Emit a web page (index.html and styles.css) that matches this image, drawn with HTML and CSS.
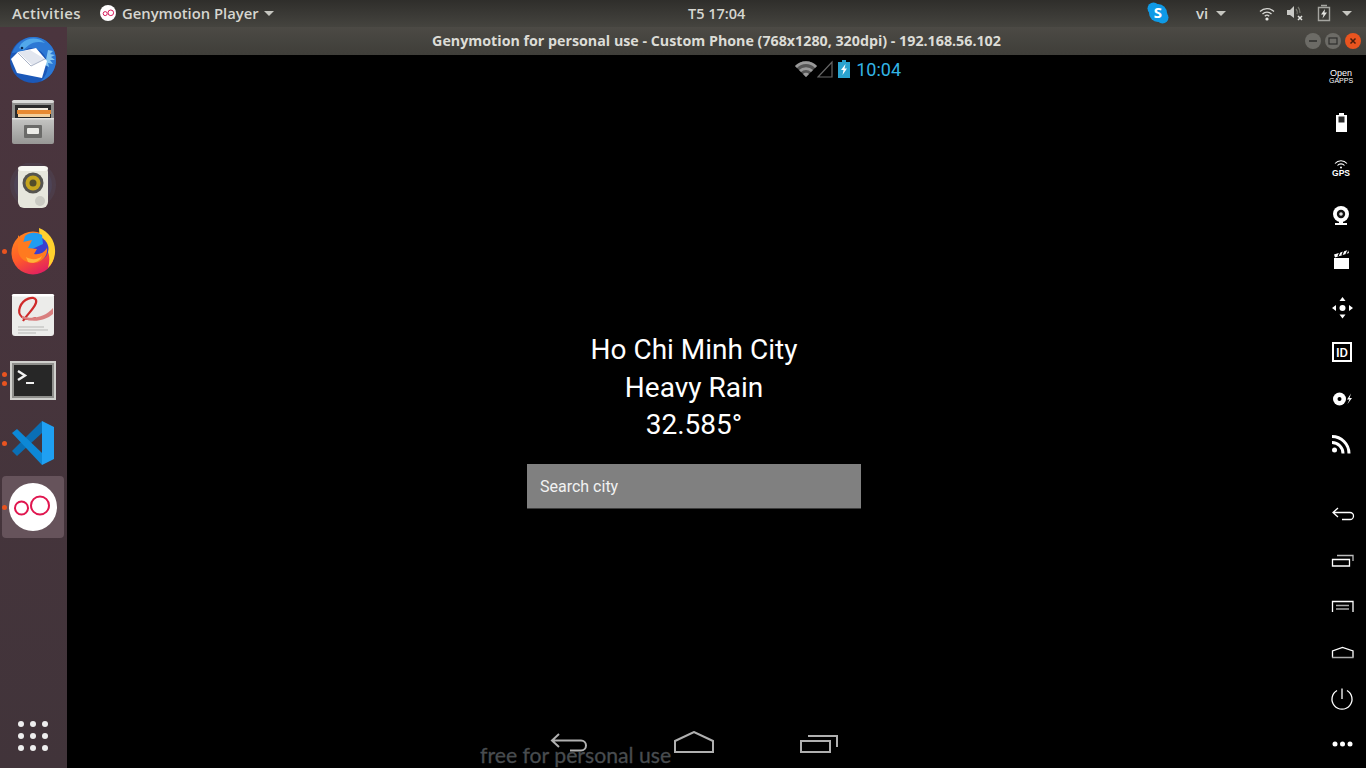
FILE: index.html
```html
<!DOCTYPE html>
<html lang="vi">
<head>
<meta charset="utf-8">
<title>Genymotion</title>
<link rel="stylesheet" href="styles.css">
</head>
<body>
<header class="topbar">
  <div class="top-left">
    <span class="activities">Activities</span>
    <span class="app-menu">
      <svg class="app-icon" viewBox="0 0 16 16"><circle cx="8" cy="8" r="8" fill="#fff"/><circle cx="5.2" cy="8.6" r="2" fill="none" stroke="#d81b5a" stroke-width="1"/><circle cx="10.8" cy="7.8" r="2.8" fill="none" stroke="#d81b5a" stroke-width="1"/></svg>
      <span class="app-name">Genymotion Player</span>
      <i class="caret"></i>
    </span>
  </div>
  <div class="clock">T5 17:04</div>
  <div class="top-right">
    <svg class="skype" viewBox="0 0 22 22"><circle cx="6.500" cy="6.500" r="6" fill="#0f9ae6"/><circle cx="15.500" cy="15.500" r="6" fill="#0f9ae6"/><circle cx="11" cy="11" r="9" fill="#0f9ae6"/><text x="11" y="16" text-anchor="middle" class="skype-s">S</text></svg>
    <span class="lang">vi</span>
    <i class="caret lang-caret"></i>
    <svg class="tray wifi-t" viewBox="0 0 16 16"><path d="M1 6.500a10 10 0 0 1 14 0M3.500 9a6.500 6.500 0 0 1 9 0M5.800 11.200a3.200 3.200 0 0 1 4.400 0" fill="none" stroke="#d8d8d4" stroke-width="1.300"/><circle cx="8" cy="14" r="1.600" fill="#e8e8e4"/></svg>
    <svg class="tray sound-t" viewBox="0 0 18 16"><path d="M1 5h3l4-4v12L4 10H1z" fill="#c9c9c5"/><path d="M10 4a5 5 0 0 1 1 5M12 2a8 8 0 0 1 2 6" fill="none" stroke="#77776f" stroke-width="1.200"/><path d="M12 11l4 4M16 11l-4 4" stroke="#e4e4e0" stroke-width="1.500"/></svg>
    <svg class="tray batt-t" viewBox="0 0 14 18"><path d="M4 1.500h6M1.500 3.500h11v13h-11z" fill="none" stroke="#a5a5a0" stroke-width="1.400"/><path d="M8 5L4 10.500h2.500L5.500 14.500 10 8.500H7.500z" fill="#e4e4e0"/></svg>
    <i class="caret"></i>
  </div>
</header>

<div class="desktop">
  <nav class="dock">
    <div class="dock-item">
      <svg class="dock-icon" viewBox="0 0 48 48">
        <circle cx="24" cy="25" r="23" fill="#1b58b8"/>
        <path d="M3 18C7 7 17 1 26 2c12 1 21 11 21 23 0 10-6 18-15 21 6-6 8-13 6-20-2-8-9-14-18-13L13 17z" fill="#2c78d4"/>
        <path d="M12 9c7-7 17-7 24-1-6-2-12-1-16 2l-6 5-4-2z" fill="#52a8ea"/>
        <path d="M39 15l5 1-3 3 5 1-4 2 4 3-5 0 3 4-5-1 1 4-4-2" fill="#82c4f0"/>
        <path d="M2 24L9 17l18-4 11 13-5 17-25-5z" fill="#fff"/>
        <path d="M9 17l12-2 15 9-13 6z" fill="#e2e6ef"/>
        <path d="M9 18l13 13 14-7" fill="none" stroke="#a8b2c6" stroke-width="1"/>
        <circle cx="13" cy="13" r="1.300" fill="#0f2850"/>
      </svg>
    </div>
    <div class="dock-item">
      <svg class="dock-icon" viewBox="0 0 48 48">
        <defs><linearGradient id="cab" x1="0" y1="0" x2="0" y2="1"><stop offset="0" stop-color="#c6c6c4"/><stop offset="1" stop-color="#979795"/></linearGradient></defs>
        <rect x="3" y="1" width="42" height="24" rx="3" fill="#8f8f8d"/>
        <rect x="3" y="1" width="42" height="3" rx="2" fill="#dadad8"/>
        <rect x="6" y="6" width="36" height="16" fill="#2a2a2a"/>
        <rect x="9" y="9" width="30" height="3" fill="#f2ece0"/>
        <rect x="8" y="11" width="34" height="4" fill="#e78a33"/>
        <rect x="9" y="15" width="32" height="3" fill="#f3cf9c"/>
        <rect x="3" y="19" width="42" height="26" rx="2" fill="url(#cab)"/>
        <rect x="3" y="19" width="42" height="1.500" fill="#e2e2e0"/>
        <rect x="15" y="26" width="18" height="13" rx="1" fill="#6b6b69"/>
        <rect x="18" y="29" width="12" height="6" rx="1" fill="#ecece8"/>
      </svg>
    </div>
    <div class="dock-item">
      <svg class="dock-icon" viewBox="0 0 48 48">
        <circle cx="24" cy="22" r="23" fill="#544c62" opacity=".35"/>
        <circle cx="24" cy="22" r="19" fill="#4e4860" opacity=".55"/>
        <rect x="9" y="3" width="30" height="42" rx="6" fill="#e6e6dc"/>
        <rect x="9" y="3" width="30" height="5" rx="4" fill="#f8f8f2"/>
        <circle cx="24" cy="20" r="10.500" fill="#55544f"/>
        <circle cx="24" cy="20" r="7.500" fill="#c6a51d"/>
        <circle cx="24" cy="20" r="3.500" fill="#534d2a"/>
        <circle cx="31" cy="38" r="5" fill="#cacac2"/>
      </svg>
    </div>
    <div class="dock-item has-pip">
      <i class="pip"></i>
      <svg class="dock-icon" viewBox="0 0 48 48">
        <defs>
          <linearGradient id="ffa" x1=".1" y1="0" x2=".6" y2="1"><stop offset="0" stop-color="#ff8a1c"/><stop offset=".55" stop-color="#ff5a2a"/><stop offset="1" stop-color="#e2215f"/></linearGradient>
        </defs>
        <circle cx="24" cy="26" r="21.500" fill="url(#ffa)"/>
        <path d="M30 1c10 4 17 13 16 25-.5 6-3 11-7 15 2-7 2-14-2-20-2-5-7-8-7-20z" fill="#ffd12e"/>
        <circle cx="27" cy="22" r="12.500" fill="#3a3fd0"/>
        <path d="M16 9c5-4 11-4 17-1l1 9-13 6-8-3z" fill="#1f9cf0"/>
        <path d="M9 8l5 7 9-2-4 8 9 1-3 5c5 1 10-1 13-6 1 9-6 15-14 15-9 0-16-7-15-16z" fill="#ff7a1f"/>
        <path d="M17 30c5 3 12 3 16-1-2 6-9 8-14 6z" fill="#ffb33a"/>
      </svg>
    </div>
    <div class="dock-item">
      <svg class="dock-icon" viewBox="0 0 48 48">
        <rect x="3" y="3" width="42" height="42" rx="3" fill="#ececea"/>
        <rect x="3" y="3" width="42" height="2.500" rx="2" fill="#fff"/>
        <path d="M27 27C14 31 8 24 11 16 14 8 25 4 27 9c2 5-8 13-13 21" fill="none" stroke="#cf2a2a" stroke-width="2.200"/>
        <path d="M13 25c11 4 23 1 31-8v6c-8 7-21 9-31 4z" fill="#d97f7f"/>
        <path d="M9 36h26M9 39h30M9 42h18" stroke="#b7b7b5" stroke-width="1"/>
      </svg>
    </div>
    <div class="dock-item has-pip">
      <i class="pip two"></i>
      <i class="pip two-b"></i>
      <svg class="dock-icon" viewBox="0 0 48 48">
        <rect x="1" y="6" width="46" height="39" fill="#d0d0cd"/>
        <rect x="3" y="8" width="42" height="35" fill="#8f8f8c"/>
        <rect x="5" y="10" width="38" height="31" fill="#272727"/>
        <path d="M9 16l7 4.500-7 4.500" fill="none" stroke="#f2f2f2" stroke-width="2.400"/>
        <path d="M17 28h8" stroke="#f2f2f2" stroke-width="2"/>
      </svg>
    </div>
    <div class="dock-item has-pip">
      <i class="pip"></i>
      <svg class="dock-icon" viewBox="0 0 48 48">
        <path d="M33 2L3 32l5 5 25-23z" fill="#0a6fb5"/>
        <path d="M33 46V34L8 10l-5 4z" fill="#0d88d6"/>
        <path d="M33 2l12 6v32l-12 6z" fill="#1fa0f2"/>
      </svg>
    </div>
    <div class="dock-item active has-pip">
      <i class="pip"></i>
      <svg class="dock-icon" viewBox="0 0 48 48"><circle cx="24" cy="24" r="24" fill="#fff"/><circle cx="12.500" cy="25" r="6.500" fill="none" stroke="#e0164f" stroke-width="2"/><circle cx="31" cy="22.500" r="9" fill="none" stroke="#e0164f" stroke-width="2"/></svg>
    </div>
    <div class="apps-grid"><i></i><i></i><i></i><i></i><i></i><i></i><i></i><i></i><i></i></div>
  </nav>

  <main class="window">
    <div class="titlebar">
      <span class="title">Genymotion for personal use - Custom Phone (768x1280, 320dpi) - 192.168.56.102</span>
      <div class="win-btns">
        <span class="win-btn"><svg viewBox="0 0 16 16"><path d="M4 8h8" stroke="#2e2e2c" stroke-width="1.500"/></svg></span>
        <span class="win-btn"><svg viewBox="0 0 16 16"><rect x="4" y="5" width="8" height="6" fill="none" stroke="#2e2e2c" stroke-width="1.200"/></svg></span>
        <span class="win-btn close"><svg viewBox="0 0 16 16"><path d="M5.500 5.500l5 5M10.500 5.500l-5 5" stroke="#4a1d0c" stroke-width="1.500"/></svg></span>
      </div>
    </div>
    <div class="content">
      <section class="screen">
        <div class="status">
          <svg class="st-wifi" viewBox="0 0 22 16"><path d="M0 5a15 15 0 0 1 22 0L11 16z" fill="#555"/><path d="M0 5a15 15 0 0 1 22 0l-2 2a12 12 0 0 0-18 0zM4 9a10 10 0 0 1 14 0l-2 2a7 7 0 0 0-10 0zM8 13a4 4 0 0 1 6 0l-3 3z" fill="#999"/></svg>
          <svg class="st-signal" viewBox="0 0 16 18"><path d="M1 17L15 2v15z" fill="none" stroke="#666" stroke-width="1.200"/></svg>
          <svg class="st-batt" viewBox="0 0 12 18"><path d="M4 0h4v2h4v16H0V2h4z" fill="#2aa3cf"/><path d="M7.500 4L3 10h2.500L4.500 15 9 8.500H6.500z" fill="#fff"/></svg>
          <span class="st-time">10:04</span>
        </div>
        <div class="weather">
          <div>Ho Chi Minh City</div>
          <div>Heavy Rain</div>
          <div>32.585°</div>
        </div>
        <div class="search">Search city</div>
        <div class="nav">
          <div class="nav-item"><svg viewBox="0 0 40 24"><path d="M10 3L3 9.500l7 6.500M3 9.500h29a5 5 0 0 1 0 10h-11" fill="none" stroke="#b0b0b0" stroke-width="2"/></svg></div>
          <div class="nav-item"><svg viewBox="0 0 40 24"><path d="M1 10L20 1l19 9v11H1z" fill="none" stroke="#b0b0b0" stroke-width="2"/></svg></div>
          <div class="nav-item"><svg viewBox="0 0 40 24"><path d="M2 10h29v11H2zM9 5h29v11" fill="none" stroke="#b0b0b0" stroke-width="2"/></svg></div>
        </div>
        <div class="watermark">free for personal use</div>
      </section>

      <aside class="rail">
        <div class="rail-item gapps"><b class="open">Open</b><b class="caps">GAPPS</b></div>
        <div class="rail-item"><svg viewBox="0 0 30 30"><path d="M13 6h5v2h3v17H10V8h3z" fill="#fff"/><rect x="12.500" y="9.500" width="6" height="6" fill="#2a2a2a"/></svg></div>
        <div class="rail-item gps"><svg viewBox="0 0 16 9"><path d="M2 3.500a8 8 0 0 1 12 0M4.500 5.500a4.500 4.500 0 0 1 7 0" fill="none" stroke="#fff" stroke-width="1.100"/><circle cx="8" cy="7.500" r="1" fill="#fff"/></svg><b>GPS</b></div>
        <div class="rail-item"><svg viewBox="0 0 30 30"><circle cx="15" cy="15" r="8" fill="#fff"/><circle cx="15" cy="15" r="4.200" fill="#111"/><circle cx="15" cy="15" r="1.800" fill="#ddd"/><path d="M9 24h12v2H9zM13 22h4v3h-4z" fill="#fff"/></svg></div>
        <div class="rail-item"><svg viewBox="0 0 30 30"><path d="M8 13h15v11H8z" fill="#fff"/><path d="M8 9.500L22 5l1 3L9 12.500z" fill="#fff"/><path d="M12 11.500l2-5M16 10l2-5M20 9l2-4" stroke="#000" stroke-width="1.200"/></svg></div>
        <div class="rail-item"><svg viewBox="0 0 30 30"><circle cx="16.500" cy="17" r="3" fill="#fff"/><path d="M16.500 6l3 4h-6zM16.500 27.500l-3-4h6zM6 17l4-3v6zM27 17l-4 3v-6z" fill="#fff"/></svg></div>
        <div class="rail-item"><span class="id-box">ID</span></div>
        <div class="rail-item"><svg viewBox="0 0 30 30"><circle cx="13.500" cy="16" r="6.500" fill="#fff"/><circle cx="13.500" cy="16" r="2" fill="#000"/><path d="M25 10.500l-4 6h2.500L21.500 21l4.500-6h-2.500z" fill="#fff"/></svg></div>
        <div class="rail-item"><svg viewBox="0 0 30 30"><circle cx="8.500" cy="21" r="2.500" fill="#fff"/><path d="M6 13.500a11 11 0 0 1 11 11M6 7.500a17 17 0 0 1 17 17" fill="none" stroke="#fff" stroke-width="3"/></svg></div>
        <div class="rail-item rail-split"><svg viewBox="0 0 30 30"><path d="M12 9L7 13.500l5 4.500M7 13.500h17a3.500 3.500 0 0 1 0 7h-8" fill="none" stroke="#fff" stroke-width="1.300"/></svg></div>
        <div class="rail-item"><svg viewBox="0 0 30 30"><path d="M6.500 14.500h17v6.500h-17z" fill="none" stroke="#fff" stroke-width="1.300"/><path d="M11 10.500h16V16" fill="none" stroke="#bbb" stroke-width="1.300"/></svg></div>
        <div class="rail-item"><svg viewBox="0 0 30 30"><path d="M6.500 21V10.500H27V21" fill="none" stroke="#fff" stroke-width="1.300"/><path d="M10 14.500h13M10 18h13" stroke="#aaa" stroke-width="1.500"/></svg></div>
        <div class="rail-item"><svg viewBox="0 0 30 30"><path d="M6.500 20.500V14l10-3.500 10.500 3.500v6.500" fill="none" stroke="#fff" stroke-width="1.300"/><path d="M6 20.500h21.500" stroke="#aaa" stroke-width="1.500"/></svg></div>
        <div class="rail-item"><svg viewBox="0 0 30 30"><path d="M16 5.500V16M11 7.500a10 10 0 1 0 10 0" fill="none" stroke="#fff" stroke-width="1.300"/></svg></div>
        <div class="rail-item"><svg viewBox="0 0 30 30"><circle cx="9" cy="15" r="2.500" fill="#fff"/><circle cx="16.500" cy="15" r="2.500" fill="#fff"/><circle cx="24" cy="15" r="2.500" fill="#fff"/></svg></div>
      </aside>
    </div>
  </main>
</div>
</body>
</html>
```

FILE: styles.css
```css
* { box-sizing: border-box; }
html, body { margin: 0; padding: 0; height: 100%; overflow: hidden; background: #000; }
body { width: 1366px; height: 768px; display: flex; flex-direction: column; font-family: "Open Sans", "Noto Sans", sans-serif; }

.topbar { height: 27px; flex: none; display: flex; align-items: center; padding-bottom: 1px; background: linear-gradient(#2f2e2b, #45443f); color: #d6d6d0; font-size: 15px; font-weight: 600; }
.top-left { flex: 0 0 688px; display: flex; align-items: center; padding-left: 12px; }
.activities { width: 88px; letter-spacing: .3px; }
.app-menu { display: flex; align-items: center; }
.app-icon { width: 16px; height: 16px; margin-right: 6px; }
.app-name { font-size: 14.800px; }
.caret { display: inline-block; width: 0; height: 0; border-left: 5px solid transparent; border-right: 5px solid transparent; border-top: 5px solid #c6c6c0; margin-left: 5px; }
.clock { width: 57px; white-space: nowrap; font-size: 14.500px; text-align: center; }
.top-right { margin-left: auto; display: flex; align-items: center; padding-right: 14px; }
.skype { width: 22px; height: 22px; margin-right: 27px; }
.skype-s { fill: #fff; font-size: 15px; font-weight: 700; font-family: "Open Sans", sans-serif; }
.lang { width: 13px; font-size: 15px; }
.lang-caret { margin-left: 7px; margin-right: 33px; }
.tray { flex: none; }
.wifi-t { width: 16px; height: 16px; margin-right: 11px; }
.sound-t { width: 18px; height: 16px; margin-right: 13px; }
.batt-t { width: 14px; height: 18px; margin-right: 6px; }

.desktop { flex: 1; display: flex; min-height: 0; }

.dock { width: 67px; flex: none; display: flex; flex-direction: column; background: linear-gradient(#4b353e, #41343a); }
.dock-item { height: 64px; flex: none; display: flex; align-items: center; justify-content: center; position: relative; width: 66px; }
.dock-icon { width: 48px; height: 48px; display: block; }
.dock-item.active::before { content: ""; position: absolute; left: 2px; top: 1px; width: 62px; height: 62px; border-radius: 4px; background: #66535b; }
.dock-item.active .dock-icon { position: relative; }
.pip { position: absolute; left: 2px; top: 29.500px; width: 5px; height: 5px; border-radius: 50%; background: #e95420; z-index: 1; }
.pip.two { top: 24.500px; }
.pip.two-b { top: 33.500px; }
.apps-grid { margin-top: auto; margin-bottom: 17px; margin-left: 18px; width: 30px; display: grid; grid-template-columns: repeat(3, 6px); gap: 6px; justify-content: space-between; }
.apps-grid i { width: 6px; height: 6px; border-radius: 50%; background: #eeeeee; }

.window { flex: 1; min-width: 0; display: flex; flex-direction: column; background: #000; }
.titlebar { height: 28px; flex: none; display: flex; align-items: center; justify-content: center; padding-bottom: 1px; position: relative; background: linear-gradient(#4c4a45, #3f3e39); color: #dcdcd6; font-size: 14.250px; font-weight: 700; }
.win-btns { position: absolute; right: 5px; top: 6px; display: flex; gap: 4px; }
.win-btn { width: 16px; height: 16px; border-radius: 50%; background: #6c6b66; display: block; }
.win-btn svg { display: block; width: 16px; height: 16px; }
.win-btn.close { background: #e9541f; }

.content { flex: 1; min-height: 0; display: flex; }
.screen { flex: 1; position: relative; display: flex; flex-direction: column; align-items: center; padding-left: 5px; color: #fff; font-family: Roboto, sans-serif; }
.status { width: 414px; height: 28px; flex: none; display: flex; align-items: center; justify-content: flex-end; }
.st-wifi { width: 22px; height: 16px; }
.st-signal { width: 16px; height: 18px; margin-right: 5px; }
.st-batt { width: 12px; height: 18px; margin-right: 6px; }
.st-time { color: #33b5e5; font-size: 18px; }
.weather { margin-top: 248px; font-size: 28px; line-height: 37.500px; text-align: center; }
.search { margin-top: 20.500px; width: 334px; height: 45px; flex: none; padding: 0 13px; display: flex; align-items: center; background: #808080; border-bottom: 1px solid #3c3c3c; font-size: 16px; color: #f2f2f2; }
.nav { margin-top: auto; height: 48px; flex: none; display: flex; padding-top: 11px; }
.nav-item { width: 125px; display: flex; justify-content: center; }
.nav-item svg { width: 40px; height: 24px; display: block; }
.watermark { position: absolute; left: 413px; bottom: 1px; font-family: Lato, sans-serif; font-size: 21.200px; line-height: 24px; color: #484c4f; -webkit-text-stroke: .3px #484c4f; white-space: nowrap; }

.rail { width: 50px; flex: none; display: flex; flex-direction: column; align-items: center; gap: 16px; padding-top: 6px; color: #fff; }
.rail-item { width: 30px; height: 30px; flex: none; display: flex; flex-direction: column; align-items: center; justify-content: center; }
.rail-item > svg { width: 30px; height: 30px; display: block; }
.rail-split { margin-top: 24px; }
.gapps { font-family: "Liberation Sans", sans-serif; line-height: 8px; white-space: nowrap; padding-top: 2px; }
.gapps b { display: block; font-weight: 400; }
.open { font-size: 9px; }
.caps { font-size: 7px; }
.gps > svg { width: 16px; height: 9px; }
.gps b { font-family: "Liberation Sans", sans-serif; font-size: 8.500px; line-height: 8px; }
.id-box { width: 20px; height: 20px; margin-left: 2px; border: 2px solid #fff; display: flex; align-items: center; justify-content: center; font-family: Roboto, sans-serif; font-size: 13px; font-weight: 500; }
```
